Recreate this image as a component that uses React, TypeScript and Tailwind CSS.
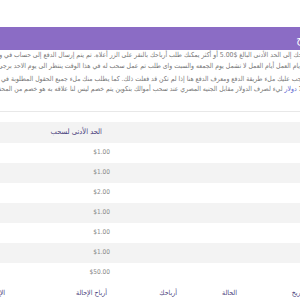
const minRows = [
  { method: "بايير", min: "$1.00" },
  { method: "بايبال", min: "$1.00" },
  { method: "بتكوين", min: "$2.00" },
  { method: "فيزا", min: "$1.00" },
  { method: "أوريدو", min: "$1.00" },
  { method: "زين", min: "$1.00" },
  { method: "بنك", min: "$50.00" },
];

const historyCols = ["#", "التاريخ", "الحالة", "أرباحك", "أرباح الإحالة", "الإجمالي"];

export default function App() {
  return (
    <div className="w-[300px] h-[300px] overflow-hidden bg-white font-['DejaVu_Sans',sans-serif] font-stretch-condensed">
      <div dir="rtl" className="w-[372px] pt-[27px]">
        {/* title bar */}
        <div className="h-[23px] bg-[#8b6cc5] flex items-center pr-[18px]">
          <h2 className="text-[12px] text-white">سحب الأرباح</h2>
        </div>

        {/* notes */}
        <div className="pr-[32px] text-[6.8px] leading-[10.5px] text-[#777] whitespace-nowrap">
          <p>
            عندما تصل أرباحك إلى الحد الأدنى البالغ $5.00 أو أكثر يمكنك طلب أرباحك بالنقر على الزر أعلاه. تم يتم إرسال الدفع إلى حساب في وسيلة الدفع الخاصة بك
            <br />
            يتم الدفع خلال أيام العمل أيام العمل لا تشمل يوم الجمعه والسبت واى طلب تم عمل سحب له في هذا الوقت ينتظر الى يوم الاحد برجى العلم
          </p>
          <p className="mt-[2.5px]">
            ملاحظة هامة: يجب عليك ملء طريقة الدفع ومعرف الدفع هنا إذا لم تكن قد فعلت ذلك. كما يطلب منك ملء جميع الحقول المطلوبة في الملف الشخصي
            <br />
            سعر صرف الـ 1 <span className="text-[#5b5fd0]">دولار</span> ليء لصرف الدولار مقابل الجنيه المصري عند سحب أموالك بتكوين يتم خصم ليس لنا علاقه به هو خصم من المحفظة
          </p>
        </div>

        <div className="mt-[16px] border-t border-[#e8e8e8]" />

        {/* minimum withdraw table */}
        <table className="mt-[10px] w-[900px] table-fixed border-collapse">
          <colgroup>
            <col className="w-[262px]" />
            <col />
          </colgroup>
          <thead>
            <tr className="h-[21px] bg-[#f3f3f3]">
              <th className="px-[8px] text-right text-[7.5px] font-normal text-[#4a3f7d]">طريقة الدفع</th>
              <th className="px-[8px] text-right text-[7.5px] font-normal text-[#4a3f7d]">الحد الأدنى لسحب</th>
            </tr>
          </thead>
          <tbody>
            {minRows.map((r, i) => (
              <tr key={i} className={i % 2 === 1 ? "h-[20px] bg-[#f3f3f3]" : "h-[20px] bg-white"}>
                <td className="px-[8px] text-right text-[6.5px] text-[#888]">{r.method}</td>
                <td className="pr-[0px] pl-[8px] text-right text-[6.5px] text-[#888]">{r.min}</td>
              </tr>
            ))}
          </tbody>
        </table>

        {/* withdraw history table */}
        <table className="w-[900px] table-fixed border-collapse">
          <colgroup>
            <col className="w-[56px]" />
            <col className="w-[71px]" />
            <col className="w-[60px]" />
            <col className="w-[70px]" />
            <col className="w-[102px]" />
            <col />
          </colgroup>
          <thead>
            <tr className="h-[22px]">
              {historyCols.map((c) => (
                <th key={c} className="px-[8px] text-right text-[7px] font-normal text-[#4a3f7d]">
                  {c}
                </th>
              ))}
            </tr>
          </thead>
        </table>
      </div>
    </div>
  );
}
